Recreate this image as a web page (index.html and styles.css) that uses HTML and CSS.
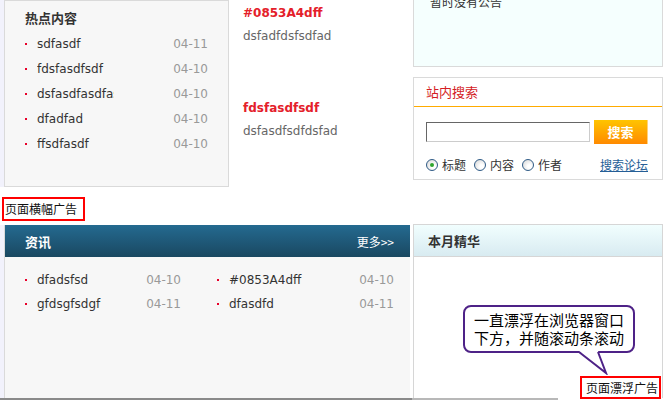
FILE: index.html
```html
<!DOCTYPE html>
<html lang="zh-CN">
<head>
    <meta charset="UTF-8">
    <title>首页</title>
    <link rel="stylesheet" href="styles.css">
</head>
<body>
    <div class="row top-row">
        <div class="hot box">
            <h3>热点内容</h3>
            <ul class="list">
                <li><span class="txt">sdfasdf</span><span class="date">04-11</span></li>
                <li><span class="txt">fdsfasdfsdf</span><span class="date">04-10</span></li>
                <li><span class="txt">dsfasdfasdfasdf</span><span class="date">04-10</span></li>
                <li><span class="txt">dfadfad</span><span class="date">04-10</span></li>
                <li><span class="txt">ffsdfasdf</span><span class="date">04-10</span></li>
            </ul>
        </div>
        <div class="news">
            <div class="news-item">
                <h4>#0853A4dff</h4>
                <p>dsfadfdsfsdfad</p>
            </div>
            <div class="news-item">
                <h4>fdsfasdfsdf</h4>
                <p>dsfasdfsdfdsfad</p>
            </div>
        </div>
        <div class="side">
            <div class="notice">
                <p>暂时没有公告</p>
            </div>
            <div class="search">
                <div class="search-title">站内搜索</div>
                <div class="search-body">
                    <div class="search-line">
                        <span class="search-input"></span>
                        <span class="search-btn">搜索</span>
                    </div>
                    <div class="search-opts">
                        <span class="radio checked"></span><span class="opt">标题</span>
                        <span class="radio"></span><span class="opt">内容</span>
                        <span class="radio"></span><span class="opt">作者</span>
                        <a class="forum-link" href="#">搜索论坛</a>
                    </div>
                </div>
            </div>
        </div>
    </div>

    <div class="ad-banner">页面横幅广告</div>

    <div class="row bottom-row">
        <div class="panel info">
            <div class="panel-head">
                <span class="panel-title">资讯</span>
                <a class="more" href="#">更多&gt;&gt;</a>
            </div>
            <ul class="list info-list">
                <li><span class="txt">dfadsfsd</span><span class="date">04-10</span></li>
                <li><span class="txt">#0853A4dff</span><span class="date">04-10</span></li>
                <li><span class="txt">gfdsgfsdgf</span><span class="date">04-11</span></li>
                <li><span class="txt">dfasdfd</span><span class="date">04-11</span></li>
            </ul>
        </div>
        <div class="panel best">
            <div class="panel-head">
                <span class="panel-title">本月精华</span>
            </div>
        </div>
    </div>
    <div class="page-edge"><span class="edge-dark"></span><span class="edge-light"></span></div>

    <div class="bubble">一直漂浮在浏览器窗口<br>下方，并随滚动条滚动</div>
    <svg class="bubble-tail" width="34" height="24" viewBox="0 0 34 24">
        <polygon points="1,0 20,0 28,22" fill="#fff"/>
        <polyline points="1,1 28,22 20,1" fill="none" stroke="#4e2287" stroke-width="2"/>
    </svg>
    <div class="float-ad">页面漂浮广告</div>
</body>
</html>
```

FILE: styles.css
```css
body {
    margin: 0;
    font-family: "DejaVu Sans", "Noto Sans CJK SC", sans-serif;
    font-size: 12px;
    color: #333;
    background: #fff;
    position: relative;
    height: 400px;
    overflow: hidden;
}
ul {
    list-style: none;
    margin: 0;
    padding: 0;
}
a {
    text-decoration: none;
}
.row {
    display: flex;
    border-left: 4px solid #f2f2fc;
}
.top-row {
    height: 187px;
}

/* 热点内容 */
.box {
    box-sizing: border-box;
    background: #f7f7f7;
    border: 1px solid #dadada;
}
.hot {
    width: 225px;
    height: 187px;
    padding: 9px 20px 0 20px;
}
.hot h3 {
    margin: 0 0 5px;
    font-size: 13px;
    line-height: 16px;
    font-family: "Noto Sans CJK SC", sans-serif;
    font-weight: bold;
    color: #333;
}
.list li {
    display: flex;
    align-items: center;
    height: 25px;
    padding-left: 12px;
    position: relative;
    color: #333;
}
.list li::before {
    content: "";
    position: absolute;
    left: 0;
    top: 12px;
    width: 2px;
    height: 2px;
    background: #e8002a;
}
.list .txt {
    flex: 1;
    white-space: nowrap;
    overflow: hidden;
}
.hot .txt {
    flex: none;
    width: 77px;
    margin-right: auto;
}
.list .date {
    color: #999;
}

/* 中间新闻 */
.news {
    width: 184px;
    padding-left: 14px;
    box-sizing: border-box;
}
.news-item {
    box-sizing: border-box;
    height: 95px;
    padding-top: 5px;
}
.news-item h4 {
    margin: 0 0 7px;
    font-size: 12px;
    line-height: 16px;
    color: #e4202a;
}
.news-item p {
    margin: 0;
    line-height: 16px;
    color: #666;
}

/* 右侧 */
.side {
    width: 250px;
}
.notice {
    box-sizing: border-box;
    height: 72px;
    background: #f5fffe;
    border: 1px solid #dadada;
    border-top: 0;
}
.notice p {
    margin: -5px 0 0 16px;
    line-height: 14px;
    font-family: "Noto Sans CJK SC", sans-serif;
    color: #333;
}
.search {
    box-sizing: border-box;
    margin-top: 10px;
    height: 103px;
    border: 1px solid #dadada;
    background: #fff;
}
.search-title {
    height: 28px;
    line-height: 28px;
    padding-left: 12px;
    font-family: "Noto Sans CJK SC", sans-serif;
    font-size: 13px;
    color: #d41c24;
    border-bottom: 1px solid #ffab00;
}
.search-body {
    padding: 13px 0 0 12px;
}
.search-line {
    display: flex;
    align-items: center;
    gap: 4px;
}
.search-input {
    box-sizing: border-box;
    width: 164px;
    height: 20px;
    border: 1px solid #ccc;
    border-top-color: #666;
    border-left-color: #666;
    background: #fff;
}
.search-btn {
    width: 54px;
    height: 24px;
    line-height: 24px;
    text-align: center;
    color: #fff;
    font-family: "Noto Sans CJK SC", sans-serif;
    font-weight: bold;
    font-size: 13px;
    background: linear-gradient(#ffc400, #ff8a00);
    border-right: 1px solid #ffd27a;
    box-sizing: border-box;
}
.search-opts {
    display: flex;
    align-items: center;
    margin-top: 12px;
    font-family: "Noto Sans CJK SC", sans-serif;
}
.radio {
    box-sizing: border-box;
    width: 12px;
    height: 12px;
    border: 1px solid #2f5b86;
    border-radius: 50%;
    background: radial-gradient(circle at 65% 65%, #fff 20%, #d8d8d8 90%);
    position: relative;
}
.radio.checked::after {
    content: "";
    position: absolute;
    left: 3px;
    top: 3px;
    width: 4px;
    height: 4px;
    border-radius: 50%;
    background: #2fa52f;
}
.opt {
    margin: 0 8px 0 4px;
    color: #333;
}
.forum-link {
    margin-left: auto;
    margin-right: 14px;
    color: #255e96;
    text-decoration: underline;
}

/* 横幅广告 */
.ad-banner {
    display: inline-block;
    margin: 10px 0 4px 2px;
    height: 24px;
    line-height: 20px;
    padding: 0 6px 0 1px;
    box-sizing: border-box;
    border: 2px solid #f00;
    font-family: "Noto Sans CJK SC", sans-serif;
    color: #111;
    vertical-align: top;
}

/* 底部面板 */
.bottom-row {
    height: 173px;
    gap: 3px;
}
.panel {
    box-sizing: border-box;
    height: 173px;
}
.info {
    width: 406px;
    background: #f7f7f7;
    border-left: 1px solid #dadada;
}
.info .panel-head {
    display: flex;
    justify-content: space-between;
    align-items: center;
    height: 32px;
    padding: 0 16px 0 20px;
    background: linear-gradient(#246a90, #1a4861);
    color: #fff;
}
.panel-title {
    font-family: "Noto Sans CJK SC", sans-serif;
    font-weight: bold;
    font-size: 13px;
}
.more {
    color: #fff;
    font-family: "Noto Sans CJK SC", sans-serif;
}
.info-list {
    display: grid;
    grid-template-columns: 156px 177px;
    column-gap: 36px;
    padding: 11px 0 0 20px;
}
.info-list li {
    height: 24px;
}
.info-list li::before {
    top: 11px;
}
.best {
    width: 250px;
    margin-top: -1px;
    height: 174px;
    border: 1px solid #d6d6d6;
    border-bottom: 0;
    background: #fff;
}
.best .panel-head {
    height: 31px;
    line-height: 31px;
    padding-left: 14px;
    background: linear-gradient(#f1fefe, #d8ebf1);
    border-bottom: 1px solid #d6d6d6;
    color: #333;
}
.page-edge {
    display: flex;
    height: 3px;
}
.edge-dark {
    width: 412px;
    background: #8a8a8a;
}
.edge-light {
    width: 146px;
    background: #b8b8b8;
}

/* 漂浮广告 */
.bubble {
    position: absolute;
    left: 463px;
    top: 305px;
    box-sizing: border-box;
    width: 172px;
    height: 48px;
    padding: 4px 0 0 9px;
    border: 2px solid #4e2287;
    border-radius: 8px;
    background: #fff;
    font-family: "Noto Sans CJK SC", sans-serif;
    font-size: 15px;
    line-height: 18px;
    color: #000;
}
.bubble-tail {
    position: absolute;
    left: 578px;
    top: 351px;
}
.float-ad {
    position: absolute;
    left: 580px;
    top: 376px;
    box-sizing: border-box;
    width: 81px;
    height: 23px;
    padding-left: 4px;
    line-height: 19px;
    border: 2px solid #f00;
    background: #fff;
    font-family: "Noto Sans CJK SC", sans-serif;
    color: #111;
}
```
